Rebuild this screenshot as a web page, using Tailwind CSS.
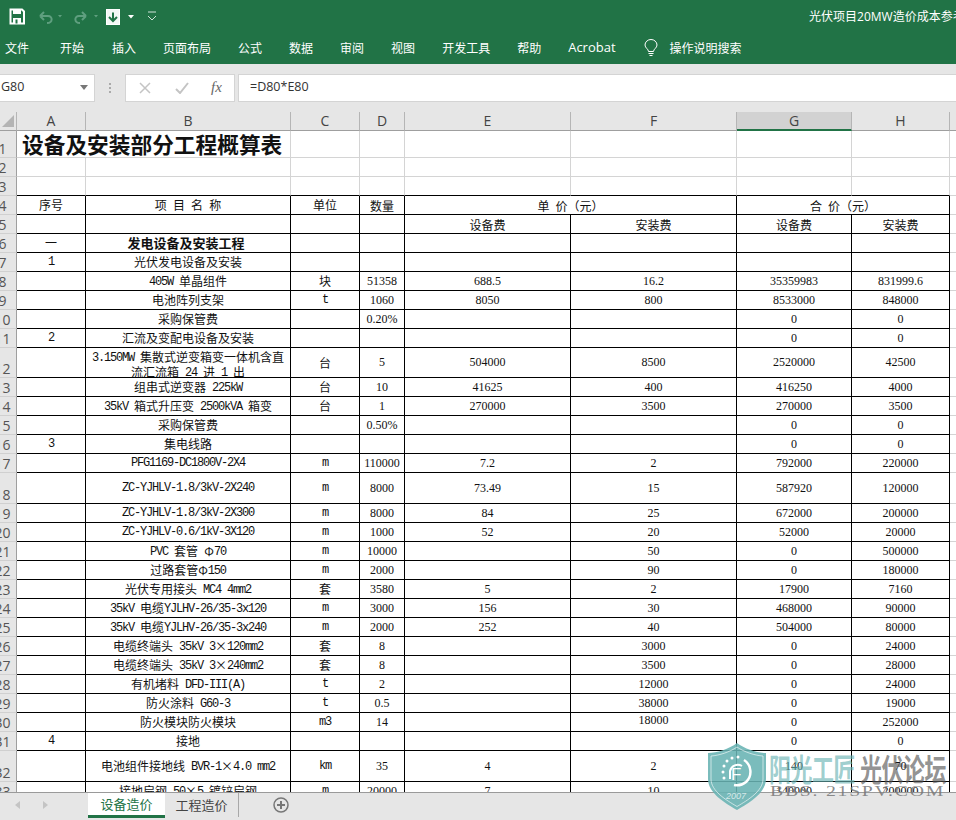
<!DOCTYPE html>
<html lang="zh-CN">
<head>
  <meta charset="UTF-8" />
  <title>光伏项目20MW造价成本参考</title>
  <script src="https://cdn.jsdelivr.net/npm/@tailwindcss/browser@4"></script>
</head>
<body class="relative flex flex-col w-[956px] h-[820px] overflow-hidden bg-[#e6e6e6] [font-family:'Noto_Sans_CJK_SC',sans-serif]">

  <!-- title bar -->
  <div class="relative flex items-center h-8 shrink-0 bg-[#217346] text-white">
    <svg class="absolute left-[9px] top-[8px]" width="150" height="18" viewBox="0 0 150 18" fill="none">
      <path d="M1.500 1.500H13L15 3.500V15.500H1.500Z" stroke="#fff" stroke-width="2" fill="#217346"/>
      <rect x="4" y="1" width="8" height="5" fill="#fff"/>
      <rect x="4" y="10" width="8" height="6" fill="#fff"/>
      <rect x="6.500" y="11.500" width="2" height="4" fill="#217346"/>
      <path d="M31 8 35 4M31 8 35 12M31 8H39C44 8 44 15 38 15" stroke="#5f9f7f" stroke-width="2"/>
      <path d="M49 7h4l-2 2.500Z" fill="#5f9f7f"/>
      <path d="M77 8 73 4M77 8 73 12M77 8H70C65 8 65 15 71 15" stroke="#5f9f7f" stroke-width="2"/>
      <path d="M85 7h4l-2 2.500Z" fill="#5f9f7f"/>
      <rect x="97.500" y="1.500" width="13" height="15" stroke="#fff" stroke-width="1" fill="#f4f8f6"/>
      <path d="M104 4.500V13M100 9 104 13 108 9" stroke="#217346" stroke-width="2"/>
      <path d="M119 7h6l-3 3.500Z" fill="#fff"/>
      <path d="M139 4h8M139 8l4 4 4-4" stroke="#cfe3d8" stroke-width="1"/>
    </svg>
    <div class="absolute left-[809px] top-[7px] whitespace-nowrap text-xs leading-[18px]">光伏项目<span class="[font-family:'Open_Sans',sans-serif]">20MW</span>造价成本参考</div>
  </div>

  <!-- ribbon tabs -->
  <div class="flex items-center h-8 shrink-0 pl-[5px] gap-[27px] bg-[#217346] text-white text-xs">
    <span class="mr-[4px]">文件</span>
    <span class="mr-[1px]">开始</span>
    <span>插入</span>
    <span>页面布局</span>
    <span>公式</span>
    <span>数据</span>
    <span>审阅</span>
    <span>视图</span>
    <span>开发工具</span>
    <span>帮助</span>
    <span class="[font-family:'Open_Sans',sans-serif] text-[13px]">Acrobat</span>
    <div class="flex items-center gap-[12px] ml-[1px]">
      <svg width="14" height="18" viewBox="0 0 14 18" fill="none" stroke="#fff" stroke-width="1">
        <path d="M4.500 12.500C4.500 10 1 9 1 6a6 5.500 0 0 1 12 0C13 9 9.500 10 9.500 12.500Z"/>
        <path d="M4.500 14.500h5M5.500 16.500h3"/>
      </svg>
      <span>操作说明搜索</span>
    </div>
  </div>

  <!-- formula bar -->
  <div class="flex items-center h-12 shrink-0 pb-[1px] text-[#333]">
    <div class="flex items-center justify-between w-[95px] h-[28px] pl-[1px] pr-[6px] bg-white border border-l-0 border-[#d4d4d4] text-[12.500px] [font-family:'Open_Sans',sans-serif]">
      <span>G80</span>
      <svg width="8" height="5" viewBox="0 0 8 5"><path d="M0 0h8L4 5Z" fill="#777"/></svg>
    </div>
    <div class="flex flex-col gap-[2px] ml-[14px] mr-[14px]">
      <i class="block w-[2px] h-[2px] bg-[#aaa]"></i>
      <i class="block w-[2px] h-[2px] bg-[#aaa]"></i>
      <i class="block w-[2px] h-[2px] bg-[#aaa]"></i>
    </div>
    <div class="flex items-center w-[110px] h-[28px] pl-[13px] bg-white border border-[#d4d4d4]">
      <svg width="12" height="12" viewBox="0 0 12 12" stroke="#c4c4c4" stroke-width="1.500"><path d="M1 1 11 11M11 1 1 11"/></svg>
      <svg class="ml-[24px]" width="14" height="12" viewBox="0 0 14 12" fill="none" stroke="#c4c4c4" stroke-width="2"><path d="M1 7 5 11 13 1"/></svg>
      <span class="ml-[22px] italic text-[15px] text-[#666] [font-family:'Liberation_Serif',serif]">fx</span>
    </div>
    <div class="flex items-center flex-1 h-[28px] ml-[3px] pl-[11px] bg-white border border-r-0 border-[#d4d4d4] text-[12.500px] [font-family:'Open_Sans',sans-serif]">=D80*E80</div>
  </div>

  <!-- sheet grid -->
  <div class="flex-1 min-h-0 overflow-hidden bg-white">
    <table class="table-fixed w-[1007px] -ml-[11px] border-separate border-spacing-0 text-xs leading-[15px] tracking-[-1.2px] text-[#111] [font-family:'Liberation_Mono','Noto_Sans_CJK_SC',monospace] [&_td]:border-r [&_td]:border-b [&_td]:p-0 [&_td]:text-center [&_td]:align-middle [&_td:last-child]:border-[#d4d4d4] [&_td:nth-child(n+5)]:tracking-normal [&_td:nth-child(n+5)]:[font-family:'Liberation_Serif',serif] [&_span]:relative [&_span]:top-[1px] [&_span]:tracking-normal [&_span]:[word-spacing:3.500px] [&_span]:[font-family:'Noto_Sans_CJK_SC',sans-serif] [&_tbody_th]:border-r [&_tbody_th]:border-b [&_tbody_th]:border-r-[#9f9f9f] [&_tbody_th]:border-b-[#d0d0d0] [&_tbody_th]:bg-[#e6e6e6] [&_tbody_th]:p-0 [&_tbody_th]:align-bottom [&_tbody_th]:font-normal [&_tbody_th]:tracking-normal [&_tbody_th]:text-sm [&_tbody_th]:leading-[16px] [&_tbody_th]:text-[#555] [&_tbody_th]:[font-family:'Open_Sans',sans-serif]">
      <colgroup>
        <col class="w-[28px]" />
        <col class="w-[69px]" />
        <col class="w-[205px]" />
        <col class="w-[69px]" />
        <col class="w-[45px]" />
        <col class="w-[166px]" />
        <col class="w-[166px]" />
        <col class="w-[115px]" />
        <col class="w-[98px]" />
        <col class="w-[46px]" />
      </colgroup>
      <thead class="[&_th]:h-[19px] [&_th]:p-0 [&_th]:border-r [&_th]:border-b [&_th]:border-r-[#b5b5b5] [&_th]:border-b-[#9f9f9f] [&_th]:bg-[#e6e6e6] [&_th]:font-normal [&_th]:tracking-normal [&_th]:text-sm [&_th]:leading-[16px] [&_th]:text-[#444] [&_th]:[font-family:'Open_Sans',sans-serif]">
        <tr>
          <th class="relative"><svg class="absolute left-[13px] top-[3px]" width="12" height="12" viewBox="0 0 12 12"><path d="M12 0V12H0Z" fill="#b4b4b4"/></svg></th>
          <th>A</th>
          <th>B</th>
          <th>C</th>
          <th>D</th>
          <th>E</th>
          <th>F</th>
          <th class="bg-[#d2d2d2]! border-b-2! border-b-[#217346]!">G</th>
          <th>H</th>
          <th></th>
        </tr>
      </thead>
      <tbody class="[&_td]:border-[#d4d4d4]">
        <tr class="h-[27px]"><th>1</th><td colspan="2" class="text-left! pl-[5px]!"><span class="text-[21.700px] leading-[24px] font-bold whitespace-nowrap">设备及安装部分工程概算表</span></td><td></td><td></td><td></td><td></td><td></td><td></td><td></td></tr>
        <tr class="h-[19px]"><th>2</th><td></td><td></td><td></td><td></td><td></td><td></td><td></td><td></td><td></td></tr>
        <tr class="h-[19px] [&_td]:border-b-black"><th>3</th><td></td><td></td><td></td><td></td><td></td><td></td><td></td><td></td><td></td></tr>
      </tbody>
      <tbody class="[&_td]:border-black [&_tr]:h-[19px]">
        <tr><th>4</th><td><span>序号</span></td><td><span>项 目 名 称</span></td><td><span>单位</span></td><td><span>数量</span></td><td colspan="2"><span>单 价（元）</span></td><td colspan="2"><span>合 价（元）</span></td><td></td></tr>
        <tr><th>5</th><td></td><td></td><td></td><td></td><td><span>设备费</span></td><td><span>安装费</span></td><td><span>设备费</span></td><td><span>安装费</span></td><td></td></tr>
        <tr><th>6</th><td><span>一</span></td><td><span class="font-bold text-[13px] -left-[2px]">发电设备及安装工程</span></td><td></td><td></td><td></td><td></td><td></td><td></td><td></td></tr>
        <tr><th>7</th><td>1</td><td><span>光伏发电设备及安装</span></td><td></td><td></td><td></td><td></td><td></td><td></td><td></td></tr>
        <tr><th>8</th><td></td><td>405W <span>单晶组件</span></td><td><span>块</span></td><td>51358</td><td>688.5</td><td>16.2</td><td>35359983</td><td>831999.6</td><td></td></tr>
        <tr><th>9</th><td></td><td><span>电池阵列支架</span></td><td>t</td><td>1060</td><td>8050</td><td>800</td><td>8533000</td><td>848000</td><td></td></tr>
        <tr><th>10</th><td></td><td><span>采购保管费</span></td><td></td><td>0.20%</td><td></td><td></td><td>0</td><td>0</td><td></td></tr>
        <tr><th>11</th><td>2</td><td><span>汇流及变配电设备及安装</span></td><td></td><td></td><td></td><td></td><td>0</td><td>0</td><td></td></tr>
        <tr class="h-[30px]!"><th>12</th><td></td><td><div class="h-[15px]">3.150MW <span>集散式逆变箱变一体机含直</span></div><div class="h-[14px]"><span>流汇流箱</span> 24 <span>进</span> 1 <span>出</span></div></td><td><span>台</span></td><td>5</td><td>504000</td><td>8500</td><td>2520000</td><td>42500</td><td></td></tr>
        <tr><th>13</th><td></td><td><span>组串式逆变器</span> 225kW</td><td><span>台</span></td><td>10</td><td>41625</td><td>400</td><td>416250</td><td>4000</td><td></td></tr>
        <tr><th>14</th><td></td><td>35kV <span>箱式升压变</span> 2500kVA <span>箱变</span></td><td><span>台</span></td><td>1</td><td>270000</td><td>3500</td><td>270000</td><td>3500</td><td></td></tr>
        <tr><th>15</th><td></td><td><span>采购保管费</span></td><td></td><td>0.50%</td><td></td><td></td><td>0</td><td>0</td><td></td></tr>
        <tr><th>16</th><td>3</td><td><span>集电线路</span></td><td></td><td></td><td></td><td></td><td>0</td><td>0</td><td></td></tr>
        <tr><th>17</th><td></td><td>PFG1169-DC1800V-2X4</td><td>m</td><td>110000</td><td>7.2</td><td>2</td><td>792000</td><td>220000</td><td></td></tr>
        <tr class="h-[31px]!"><th>18</th><td></td><td>ZC-YJHLV-1.8/3kV-2X240</td><td>m</td><td>8000</td><td>73.49</td><td>15</td><td>587920</td><td>120000</td><td></td></tr>
        <tr><th>19</th><td></td><td>ZC-YJHLV-1.8/3kV-2X300</td><td>m</td><td>8000</td><td>84</td><td>25</td><td>672000</td><td>200000</td><td></td></tr>
        <tr><th>20</th><td></td><td>ZC-YJHLV-0.6/1kV-3X120</td><td>m</td><td>1000</td><td>52</td><td>20</td><td>52000</td><td>20000</td><td></td></tr>
        <tr><th>21</th><td></td><td>PVC <span>套管 Φ</span>70</td><td>m</td><td>10000</td><td></td><td>50</td><td>0</td><td>500000</td><td></td></tr>
        <tr><th>22</th><td></td><td><span>过路套管Φ</span>150</td><td>m</td><td>2000</td><td></td><td>90</td><td>0</td><td>180000</td><td></td></tr>
        <tr><th>23</th><td></td><td><span>光伏专用接头</span> MC4 4mm2</td><td><span>套</span></td><td>3580</td><td>5</td><td>2</td><td>17900</td><td>7160</td><td></td></tr>
        <tr><th>24</th><td></td><td>35kV <span>电缆</span>YJLHV-26/35-3x120</td><td>m</td><td>3000</td><td>156</td><td>30</td><td>468000</td><td>90000</td><td></td></tr>
        <tr><th>25</th><td></td><td>35kV <span>电缆</span>YJLHV-26/35-3x240</td><td>m</td><td>2000</td><td>252</td><td>40</td><td>504000</td><td>80000</td><td></td></tr>
        <tr><th>26</th><td></td><td><span>电缆终端头</span> 35kV 3<span>×</span>120mm2</td><td><span>套</span></td><td>8</td><td></td><td>3000</td><td>0</td><td>24000</td><td></td></tr>
        <tr><th>27</th><td></td><td><span>电缆终端头</span> 35kV 3<span>×</span>240mm2</td><td><span>套</span></td><td>8</td><td></td><td>3500</td><td>0</td><td>28000</td><td></td></tr>
        <tr><th>28</th><td></td><td><span>有机堵料</span> DFD-III(A)</td><td>t</td><td>2</td><td></td><td>12000</td><td>0</td><td>24000</td><td></td></tr>
        <tr><th>29</th><td></td><td><span>防火涂料</span> G60-3</td><td>t</td><td>0.5</td><td></td><td>38000</td><td>0</td><td>19000</td><td></td></tr>
        <tr><th>30</th><td></td><td><span>防火模块防火模块</span></td><td>m3</td><td>14</td><td></td><td class="pb-[3px]!">18000</td><td>0</td><td>252000</td><td></td></tr>
        <tr><th>31</th><td>4</td><td><span>接地</span></td><td></td><td></td><td></td><td></td><td>0</td><td>0</td><td></td></tr>
        <tr class="h-[31px]!"><th>32</th><td></td><td><span>电池组件接地线</span> BVR-1<span>×</span>4.0 mm2</td><td>km</td><td>35</td><td>4</td><td>2</td><td>140</td><td>70</td><td></td></tr>
        <tr><th>33</th><td></td><td><span>接地扁钢</span> 50<span>×</span>5 <span>镀锌扁钢</span></td><td>m</td><td>20000</td><td>7</td><td>10</td><td>140000</td><td>200000</td><td></td></tr>
      </tbody>
    </table>
  </div>

  <!-- sheet tabs -->
  <div class="flex items-start h-7 shrink-0 border-t border-[#9a9a9a] bg-[#e6e6e6] text-[13px]">
    <div class="flex items-center gap-[23px] w-[88px] h-[24px] pl-[15px]">
      <svg width="5" height="8" viewBox="0 0 5 8"><path d="M5 0V8L0 4Z" fill="#c4c4c4"/></svg>
      <svg width="5" height="8" viewBox="0 0 5 8"><path d="M0 0V8L5 4Z" fill="#c4c4c4"/></svg>
    </div>
    <div class="flex items-center justify-center w-[77px] h-[25px] bg-white border-b-[3px] border-[#217346] text-[#217346]">设备造价</div>
    <div class="flex items-center justify-center w-[74px] h-[24px] text-[#444] border-r border-[#a8a8a8]">工程造价</div>
    <svg class="ml-[34px] mt-[4px]" width="16" height="16" viewBox="0 0 16 16" fill="none" stroke="#777" stroke-width="1.500">
      <circle cx="8" cy="8" r="7"/>
      <path d="M8 4v8M4 8h8" stroke-width="2"/>
    </svg>
  </div>

  <!-- forum watermark -->
  <div class="absolute left-[706px] top-[742px] w-[245px] h-[70px] pointer-events-none">
    <svg class="absolute left-0 top-0" width="62" height="69" viewBox="0 0 62 69">
      <path d="M31 1C39 7 51 11 60 11V37C60 51 43 61 31 68C19 61 2 51 2 37V11C11 11 23 7 31 1Z" fill="#68b3b3" fill-opacity="0.88"/>
      <path d="M31 5C38 10 49 13.500 57 14V37C57 49 42 58 31 64.500C20 58 5 49 5 37V14C13 13.500 24 10 31 5Z" fill="none" stroke="#fff" stroke-opacity="0.6" stroke-width="1"/>
      <path d="M38 18A14 14 0 0 1 40 40A14 14 0 0 1 28 43" fill="none" stroke="#fff" stroke-width="2.500"/>
      <path d="M36 24A8 8 0 0 0 24 29V37" fill="none" stroke="#fff" stroke-width="2"/>
      <text x="25" y="38" fill="#fff" font-size="17" font-family="Liberation Sans">F</text>
      <g fill="#fff"><circle cx="17" cy="30" r="1.500"/><circle cx="18" cy="24" r="1.500"/><circle cx="21" cy="19" r="1.500"/><circle cx="26" cy="16" r="1.500"/><circle cx="32" cy="15" r="1.500"/><circle cx="18" cy="36" r="1.500"/></g>
      <text x="20" y="57" fill="#fff" fill-opacity="0.7" font-size="9" font-style="italic" font-family="Liberation Sans">2007</text>
    </svg>
    <div class="absolute left-[63px] top-[4px] flex gap-[5px] whitespace-nowrap text-[22px] leading-[30px] font-bold tracking-[-0.500px] scale-y-140 origin-top">
      <span class="text-[#68b3b3]/65">阳光工匠</span>
      <span class="text-[#555]/65">光伏论坛</span>
    </div>
    <div class="absolute left-[64px] top-[41px] whitespace-nowrap text-[15px] leading-[16px] tracking-[1.300px] scale-x-[1.32] origin-left text-[#777]/85 [font-family:'Liberation_Serif',serif]">BBS. 21SPV.COM</div>
  </div>

</body>
</html>
